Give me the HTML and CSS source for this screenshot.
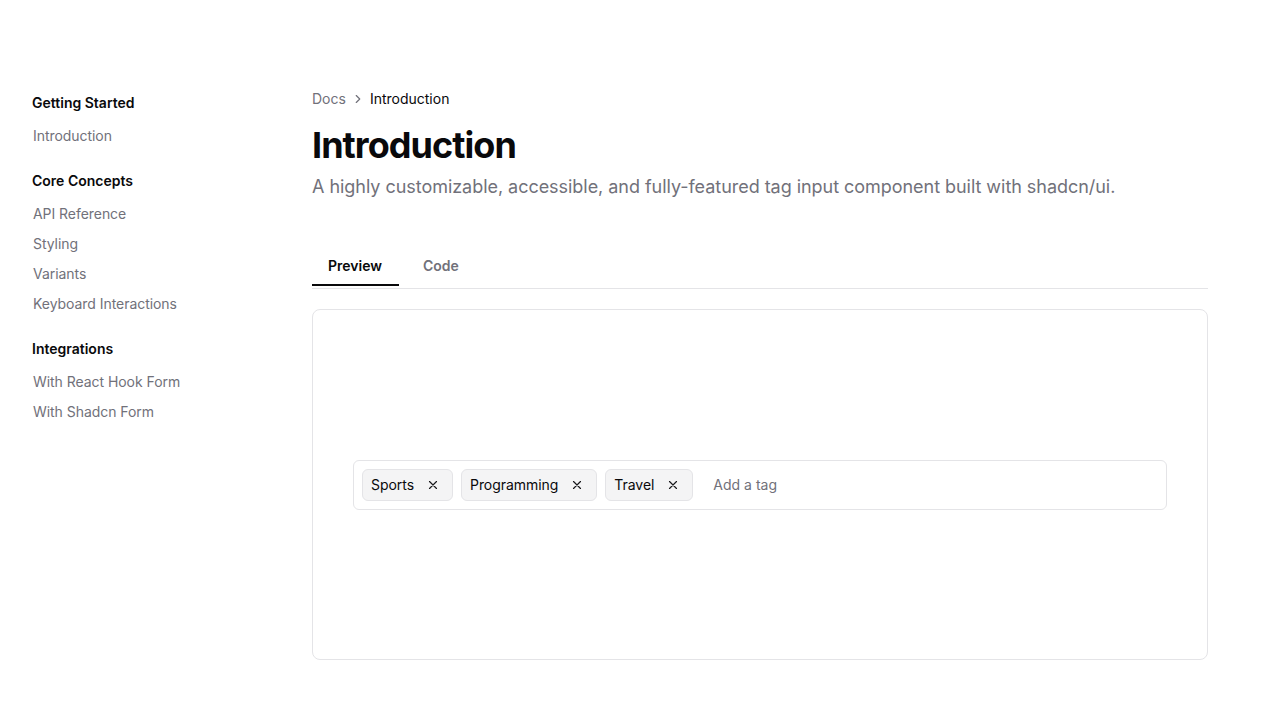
FILE: index.html
```html
<!DOCTYPE html>
<html lang="en">
<head>
<meta charset="utf-8">
<title>Introduction</title>
<link rel="stylesheet" href="styles.css">
</head>
<body>
<div class="page">
  <aside class="sidebar">
    <div class="group">
      <h4 class="group-title">Getting Started</h4>
      <a class="nav-item">Introduction</a>
    </div>
    <div class="group">
      <h4 class="group-title">Core Concepts</h4>
      <a class="nav-item">API Reference</a>
      <a class="nav-item">Styling</a>
      <a class="nav-item">Variants</a>
      <a class="nav-item">Keyboard Interactions</a>
    </div>
    <div class="group">
      <h4 class="group-title">Integrations</h4>
      <a class="nav-item">With React Hook Form</a>
      <a class="nav-item">With Shadcn Form</a>
    </div>
  </aside>
  <main class="main">
    <nav class="breadcrumb">
      <span class="crumb">Docs</span>
      <svg class="chev" viewBox="0 0 24 24" width="14" height="14" fill="none" stroke="currentColor" stroke-width="2" stroke-linecap="round" stroke-linejoin="round"><path d="m9 18 6-6-6-6"/></svg>
      <span class="crumb current">Introduction</span>
    </nav>
    <h1 class="title">Introduction</h1>
    <p class="lead">A highly customizable, accessible, and fully-featured tag input component built with shadcn/ui.</p>
    <div class="tabs">
      <button class="tab active">Preview</button>
      <button class="tab">Code</button>
    </div>
    <section class="preview">
      <div class="tag-input">
        <span class="tag">Sports<button class="tag-x"><svg viewBox="0 0 24 24" width="14" height="14" fill="none" stroke="currentColor" stroke-width="2" stroke-linecap="round"><path d="M18 6 6 18M6 6l12 12"/></svg></button></span>
        <span class="tag">Programming<button class="tag-x"><svg viewBox="0 0 24 24" width="14" height="14" fill="none" stroke="currentColor" stroke-width="2" stroke-linecap="round"><path d="M18 6 6 18M6 6l12 12"/></svg></button></span>
        <span class="tag">Travel<button class="tag-x"><svg viewBox="0 0 24 24" width="14" height="14" fill="none" stroke="currentColor" stroke-width="2" stroke-linecap="round"><path d="M18 6 6 18M6 6l12 12"/></svg></button></span>
        <input class="field" type="text" placeholder="Add a tag">
      </div>
    </section>
  </main>
</div>
</body>
</html>
```

FILE: styles.css
```css
* { box-sizing: border-box; }
html, body { margin: 0; padding: 0; background: #ffffff; }
body {
  font-family: Inter, "Liberation Sans", sans-serif;
  color: #09090b;
  -webkit-font-smoothing: antialiased;
}
.page {
  display: flex;
  padding: 0 72px 0 32px;
  min-height: 720px;
}
.sidebar {
  width: 280px;
  flex: none;
  padding-top: 93px;
  display: flex;
  flex-direction: column;
  gap: 20px;
}
.group { display: flex; flex-direction: column; }
.group-title {
  margin: 0 0 8px;
  font-size: 14px;
  line-height: 20px;
  font-weight: 600;
  color: #09090b;
}
.nav-item {
  display: block;
  padding: 5px 0 5px 1px;
  font-size: 14px;
  line-height: 20px;
  color: #71717a;
  letter-spacing: -0.05px;
}
.main {
  flex: 1;
  min-width: 0;
  padding-top: 89px;
}
.breadcrumb {
  display: flex;
  align-items: center;
  gap: 5px;
  font-size: 14px;
  line-height: 20px;
  color: #71717a;
}
.chev { color: #71717a; }
.crumb.current { color: #09090b; }
.title {
  margin: 16px 0 0;
  font-size: 36px;
  line-height: 40px;
  font-weight: 700;
  letter-spacing: -0.95px;
  color: #09090b;
}
.lead {
  margin: 8px 0 0;
  font-size: 18px;
  line-height: 28px;
  color: #71717a;
  letter-spacing: -0.04px;
}
.tabs {
  margin-top: 45px;
  display: flex;
  gap: 8px;
  border-bottom: 1px solid #e4e4e7;
  padding-bottom: 2px;
}
.tab {
  font-family: inherit;
  background: none;
  border: none;
  border-bottom: 2px solid transparent;
  padding: 10px 16px 8px;
  font-size: 14px;
  line-height: 20px;
  font-weight: 600;
  color: #71717a;
  cursor: pointer;
}
.tab.active {
  color: #09090b;
  border-bottom-color: #09090b;
  padding-right: 17px;
}
.preview {
  margin-top: 20px;
  height: 351px;
  border: 1px solid #e4e4e7;
  border-radius: 8px;
  padding: 0 40px;
  display: flex;
  align-items: center;
}
.tag-input {
  width: 100%;
  height: 50px;
  border: 1px solid #e4e4e7;
  border-radius: 6px;
  padding: 0 8px;
  display: flex;
  align-items: center;
  gap: 8px;
}
.tag {
  display: inline-flex;
  align-items: center;
  height: 32px;
  padding: 0 7px 0 8px;
  gap: 7px;
  background: #f4f4f5;
  border: 1px solid #e4e4e7;
  border-radius: 6px;
  font-size: 14px;
  line-height: 20px;
  color: #09090b;
  letter-spacing: -0.05px;
}
.tag-x {
  width: 24px;
  height: 24px;
  padding: 0;
  border: none;
  background: none;
  display: inline-flex;
  align-items: center;
  justify-content: center;
  color: #18181b;
}
.field {
  flex: 1;
  border: none;
  outline: none;
  font-family: inherit;
  font-size: 14px;
  line-height: 20px;
  padding: 0 12px;
  color: #09090b;
  background: transparent;
}
.field::placeholder { color: #71717a; }
```
